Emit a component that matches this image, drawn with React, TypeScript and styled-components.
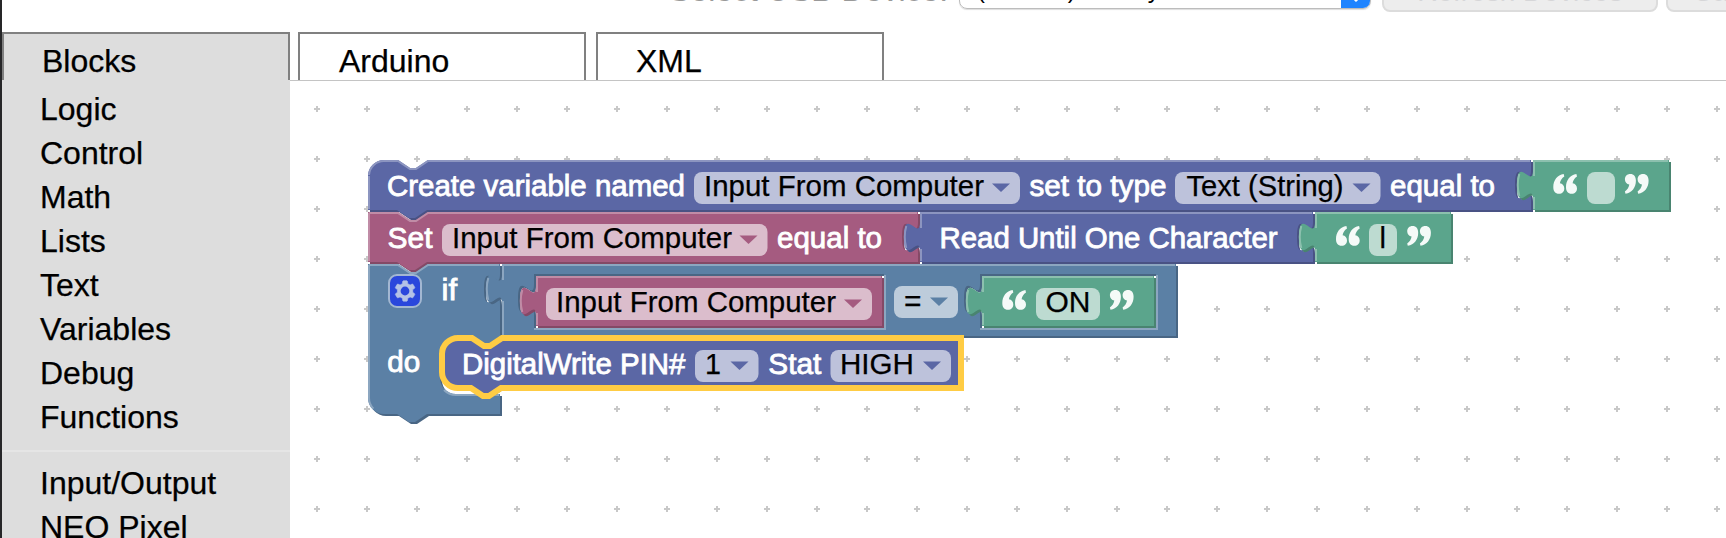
import React from "react";
import styled, { createGlobalStyle } from "styled-components";

const GlobalStyle = createGlobalStyle`
  body {
    margin: 0;
    background: #fff;
    overflow: hidden;
    font-family: "Liberation Sans", Arial, sans-serif;
  }
`;

const Page = styled.div`
  box-sizing: border-box;
  display: flex;
  flex-direction: column;
  width: 1726px;
  height: 538px;
  overflow: hidden;
  border-left: 2px solid #262628;
  background: #fff;
  color: #000;
`;

const Header = styled.header`
  flex: none;
  height: 32px;
  overflow: hidden;
`;

const PortBar = styled.div`
  display: flex;
  align-items: flex-start;
  width: 1800px;
  margin-top: -30px;
  padding-left: 667px;
`;

const PortLabel = styled.div`
  width: 290px;
  height: 40px;
  line-height: 40px;
  font-size: 32px;
  color: #999;
  white-space: nowrap;
`;

const Select = styled.div`
  box-sizing: border-box;
  display: flex;
  width: 412px;
  height: 39px;
  overflow: hidden;
  border: 1px solid #bcbcbc;
  border-radius: 8px;
  box-shadow: 0 1px 1px #ddd;
`;

const SelectText = styled.div`
  flex: 1;
  padding-left: 17px;
  font-size: 24px;
  line-height: 38px;
  white-space: nowrap;
`;

const SelectArrows = styled.div`
  display: flex;
  align-items: flex-end;
  justify-content: center;
  width: 29px;
  background: #1f84ff;
`;

const HeaderButton = styled.div<{ $width: number }>`
  box-sizing: border-box;
  flex: none;
  width: ${(p) => p.$width}px;
  height: 42px;
  margin-left: ${(p) => (p.$width > 200 ? 11 : 8)}px;
  border: 2px solid #dcdcdc;
  border-radius: 8px;
  background: #ededed;
  color: #d6d6d8;
  font-size: 28px;
  line-height: 39px;
  text-align: center;
  white-space: nowrap;
`;

const TabBar = styled.nav`
  flex: none;
  display: flex;
  height: 48px;
`;

const Tab = styled.div<{ $active?: boolean; $gap?: number }>`
  box-sizing: border-box;
  width: 288px;
  height: 48px;
  margin-left: ${(p) => p.$gap ?? 0}px;
  padding-left: ${(p) => (p.$gap === 8 ? 39 : 38)}px;
  border: 2px solid #808080;
  border-bottom: 0;
  background: ${(p) => (p.$active ? "#ddd" : "#fff")};
  font-size: 32px;
  line-height: 54px;
  -webkit-text-stroke: 0.25px #000;
`;

const Main = styled.div`
  display: flex;
  flex: 1;
  min-height: 0;
`;

const Toolbox = styled.aside`
  flex: none;
  box-sizing: border-box;
  width: 288px;
  padding-top: 7px;
  overflow: hidden;
  background: #ddd;
`;

const Category = styled.div`
  height: 44px;
  padding-left: 38px;
  font-size: 32px;
  line-height: 44px;
  white-space: nowrap;
  -webkit-text-stroke: 0.25px #000;
`;

const Separator = styled.div`
  height: 2px;
  margin: 11px 0 9px;
  background: #e5e5e5;
`;

const Workspace = styled.section`
  flex: 1;
  overflow: hidden;
  border-top: 1px solid #c4c4c4;
`;

const Canvas = styled.svg`
  display: block;
`;

const LabelText = styled.text`
  font-family: "Liberation Sans", Arial, sans-serif;
  font-size: 29.8px;
  fill: #fff;
  stroke: #fff;
  stroke-width: 0.85px;
`;

const ValueText = styled.text`
  font-family: "Liberation Sans", Arial, sans-serif;
  font-size: 29.8px;
  fill: #000;
  stroke: #000;
  stroke-width: 0.25px;
`;

const FieldBox = styled.rect`
  fill: #fff;
  fill-opacity: 0.6;
`;

type Hue = { main: string; light: string; dark: string };

const BLUE: Hue = { main: "#5b67a5", light: "#8c95c0", dark: "#495284" };
const PINK: Hue = { main: "#a55b80", light: "#c08ca6", dark: "#844966" };
const STEEL: Hue = { main: "#5b80a5", light: "#8ca6c0", dark: "#496684" };
const GREEN: Hue = { main: "#5ba58c", light: "#8cc0ae", dark: "#498470" };

const NOTCH = "H 15 l 6,4 3,0 6,-4";
const NOTCH_BACK = "H 29.5 l -6,4 -3,0 -6,-4";
const SOCKET = "v 5 c 0,10 -8,-8 -8,7.5 s 8,-2.5 8,7.5";
const PLUG = "V 20 c 0,-10 -8,8 -8,-7.5 s 8,2.5 8,-7.5";
const PLUG_LIGHT = "V 18.5 m -7.36,-0.5 q -1.52,-5.5 0,-11 m 7.36,1 V 0.5 H 1";
const ROUND_TOP = "m 0,8 A 8,8 0 0,1 8,0";
const ROUND_TOP_LIGHT = "m 0.5,7.5 A 7.5,7.5 0 0,1 8,0.5";

const socketLight = (edge: number, y = 0) => `M ${edge - 5},${y + 19.3} l 3.68,-2.1`;

const valuePath = (w: number, socket = false) =>
  `m 0,0 H ${w} ${socket ? SOCKET : ""} V 25 H 0 ${PLUG} z`;
const valueLight = (w: number, socket = false, h = 25) =>
  `m 0.5,0.5 H ${w - 0.5} ${socket ? socketLight(w) : ""} M 0.5,${h - 0.5} ${PLUG_LIGHT}`;

const cutout = (x: number, w: number) => `M ${x + w},5 H ${x} ${SOCKET} V 32 H ${x + w} z`;
const cutoutLight = (x: number, w: number) =>
  `M ${x + w + 0.5},5.5 V 32.5 H ${x} ${socketLight(x + 0.4, 5)}`;

interface BlockProps {
  x: number;
  y: number;
  hue: Hue;
  path: string;
  light?: string;
  selected?: boolean;
}

function Block({ x, y, hue, path, light, selected }: BlockProps) {
  return (
    <g transform={`translate(${x} ${y}) scale(2)`}>
      <path d={path} transform="translate(1 1)" fill={hue.dark} fillRule="evenodd" />
      <path
        d={path}
        fill={hue.main}
        fillRule="evenodd"
        stroke={selected ? "#fc4" : "none"}
        strokeWidth={3}
      />
      {light && <path d={light} fill="none" stroke={hue.light} strokeWidth={1} />}
    </g>
  );
}

interface TextProps {
  x: number;
  y: number;
  w: number;
  children: string;
}

const Label = ({ x, y, w, children }: TextProps) => (
  <LabelText x={x} y={y} textLength={w} lengthAdjust="spacingAndGlyphs">
    {children}
  </LabelText>
);

interface FieldProps {
  x: number;
  y: number;
  w: number;
  textX?: number;
  textW?: number;
  text?: string;
  hue?: Hue;
  baseline?: number;
}

function Field({ x, y, w, textX, textW, text, hue, baseline = 24 }: FieldProps) {
  const right = x + w;
  return (
    <g>
      <FieldBox x={x} y={y} width={w} height={32} rx={8} />
      {text && (
        <ValueText x={textX} y={y + baseline} textLength={textW} lengthAdjust="spacingAndGlyphs">
          {text}
        </ValueText>
      )}
      {hue && (
        <path d={`M ${right - 28},${y + 11.5} h 18 l -9,8.5 z`} fill={hue.main} />
      )}
    </g>
  );
}

const MARK =
  "M10.4 0 C4 1.2 0 6 0 13 C0 17.4 2 19.8 5.6 19.8 C8.9 19.8 11 17.6 11 14.5 C11 11.6 9.2 9.6 6.6 9.3 C7 6.4 8.6 3.9 11 2.4 Z";

function Quote({ x, y, close }: { x: number; y: number; close?: boolean }) {
  return (
    <g
      fill="#fff"
      fillOpacity={0.94}
      transform={`translate(${x} ${y})${close ? " rotate(180 11.8 9.9)" : ""}`}
    >
      <path d={MARK} />
      <path d={MARK} transform="translate(12.7 0)" />
    </g>
  );
}

function Gear({ x, y }: { x: number; y: number }) {
  return (
    <g transform={`translate(${x} ${y}) scale(2)`}>
      <rect width={16} height={16} rx={4} fill="#2a47dc" stroke="#a3b7d2" />
      <path
        fill="#b4c2e6"
        stroke="#b4c2e6"
        strokeWidth={0.3}
        d="m4.203,7.296 0,1.368 -0.92,0.677 -0.11,0.41 0.9,1.559 0.41,0.11 1.043,-0.457 1.187,0.683 0.127,1.134 0.3,0.3 1.8,0 0.3,-0.299 0.127,-1.138 1.185,-0.682 1.046,0.458 0.409,-0.11 0.9,-1.559 -0.11,-0.41 -0.92,-0.677 0,-1.366 0.92,-0.677 0.11,-0.41 -0.9,-1.559 -0.409,-0.109 -1.046,0.458 -1.185,-0.682 -0.127,-1.138 -0.3,-0.299 -1.8,0 -0.3,0.3 -0.126,1.135 -1.187,0.682 -1.043,-0.457 -0.41,0.11 -0.899,1.559 0.108,0.409z"
      />
      <circle cx={8} cy={8} r={2.2} fill="#2a47dc" />
    </g>
  );
}

function Blocks() {
  return (
    <g>
      <Block
        x={368}
        y={160}
        hue={BLUE}
        path={`${ROUND_TOP} ${NOTCH} H 581.5 ${SOCKET} V 25 ${NOTCH_BACK} H 0 z`}
        light={`${ROUND_TOP_LIGHT} ${NOTCH} H 581 ${socketLight(581.5)} M 0.5,24.5 V 8`}
      />
      <Label x={387} y={196} w={298}>Create variable named</Label>
      <Field x={694} y={172} w={326} text="Input From Computer" textX={704} textW={280} hue={BLUE} />
      <Label x={1029.5} y={196} w={137}>set to type</Label>
      <Field x={1175} y={172} w={205.5} text="Text (String)" textX={1186.5} textW={157} hue={BLUE} />
      <Label x={1390} y={196} w={105}>equal to</Label>
      <Block x={1533} y={160} hue={GREEN} path={valuePath(68)} light={valueLight(68)} />
      <Quote x={1553.3} y={174} />
      <Field x={1587} y={172} w={28} />
      <Quote x={1625} y={174} close />

      <Block
        x={368}
        y={212}
        hue={PINK}
        path={`m 0,0 ${NOTCH} H 275 ${SOCKET} V 25 ${NOTCH_BACK} H 0 z`}
        light={`m 0.5,0.5 ${NOTCH} H 274.5 ${socketLight(275)} M 0.5,24.5 V 0.5`}
      />
      <Label x={387.5} y={248} w={45}>Set</Label>
      <Field x={442} y={224} w={325.5} text="Input From Computer" textX={452} textW={280} hue={PINK} />
      <Label x={777} y={248} w={105}>equal to</Label>
      <Block x={920} y={212} hue={BLUE} path={valuePath(196.5, true)} light={valueLight(196.5, true)} />
      <Label x={939.5} y={248} w={338}>Read Until One Character</Label>
      <Block x={1315} y={212} hue={GREEN} path={valuePath(68)} light={valueLight(68)} />
      <Quote x={1336} y={226} />
      <Field x={1369} y={224} w={28} text="l" textX={1379.6} textW={6.5} />
      <Quote x={1407.3} y={226} close />

      <Block
        x={368}
        y={264}
        hue={STEEL}
        path={`m 0,0 ${NOTCH} H 66 ${SOCKET} V 36 l -6,4 -3,0 -6,-4 h -7 a 8,8 0 0,0 -8,8 v 13 a 8,8 0 0,0 8,8 H 66 V 75 ${NOTCH_BACK} H 8 a 8,8 0 0,1 -8,-8 z`}
        light={`m 0.5,0.5 ${NOTCH} H 65.5 ${socketLight(66)} M 38,63 A 8.5,8.5 0 0,0 44,65.5 H 65.5 M 2.7,72.3 A 7.5,7.5 0 0,1 0.5,67 V 0.5`}
      />
      <Gear x={389} y={275} />
      <Label x={441.5} y={300} w={15.5}>if</Label>
      <Label x={387.3} y={372} w={33}>do</Label>
      <Block
        x={502}
        y={264}
        hue={STEEL}
        path={`m 0,0 H 337 V 36 H 0 ${PLUG} z ${cutout(16, 175)} ${cutout(239, 88)}`}
        light={`${valueLight(337, false, 36)} ${cutoutLight(16, 175)} ${cutoutLight(239, 88)}`}
      />
      <Block x={536} y={276} hue={PINK} path={valuePath(173)} light={valueLight(173)} />
      <Field x={546} y={288} w={326} text="Input From Computer" textX={556} textW={280} hue={PINK} />
      <Field x={894} y={286} w={64} text="=" textX={904} textW={17.5} hue={STEEL} baseline={25} />
      <Block x={982} y={276} hue={GREEN} path={valuePath(86)} light={valueLight(86)} />
      <Quote x={1002.3} y={290} />
      <Field x={1036} y={288} w={64} text="ON" textX={1045.5} textW={45} />
      <Quote x={1110} y={290} close />

      <Block
        x={442}
        y={338}
        hue={BLUE}
        selected
        path={`${ROUND_TOP} ${NOTCH} H 259.5 V 25 ${NOTCH_BACK} H 8 a 8,8 0 0,1 -8,-8 z`}
      />
      <Label x={462} y={374} w={223.5}>DigitalWrite PIN#</Label>
      <Field x={695} y={350} w={63.5} text="1" textX={705} textW={16} hue={BLUE} />
      <Label x={768.3} y={374} w={53}>Stat</Label>
      <Field x={830.5} y={350} w={120.5} text="HIGH" textX={840} textW={74} hue={BLUE} />
    </g>
  );
}

const MAIN_CATEGORIES = ["Logic", "Control", "Math", "Lists", "Text", "Variables", "Debug", "Functions"];
const DEVICE_CATEGORIES = ["Input/Output", "NEO Pixel"];

export default function App() {
  return (
    <>
      <GlobalStyle />
      <Page>
        <Header>
          <PortBar>
            <PortLabel>Select USB Device:</PortLabel>
            <Select>
              <SelectText>(Arduino) /dev/tty.usbmodem</SelectText>
              <SelectArrows>
                <svg width="12" height="16" viewBox="0 0 12 16">
                  <path d="M1 3 L6 8 L11 3" fill="none" stroke="#fff" strokeWidth="3" />
                </svg>
              </SelectArrows>
            </Select>
            <HeaderButton $width={276}>Refresh Devices</HeaderButton>
            <HeaderButton $width={120}>Save</HeaderButton>
          </PortBar>
        </Header>
        <TabBar>
          <Tab $active>Blocks</Tab>
          <Tab $gap={8}>Arduino</Tab>
          <Tab $gap={10}>XML</Tab>
        </TabBar>
        <Main>
          <Toolbox>
            {MAIN_CATEGORIES.map((name) => (
              <Category key={name}>{name}</Category>
            ))}
            <Separator />
            {DEVICE_CATEGORIES.map((name) => (
              <Category key={name}>{name}</Category>
            ))}
          </Toolbox>
          <Workspace>
            <Canvas width={1436} height={457} viewBox="290 81 1436 457">
              <defs>
                <pattern id="grid" x={292} y={84} width={50} height={50} patternUnits="userSpaceOnUse">
                  <path d="M22 25 h6 M25 22 v6" stroke="#c8c8c8" strokeWidth={2} />
                </pattern>
              </defs>
              <rect x={290} y={81} width={1436} height={457} fill="url(#grid)" />
              <Blocks />
            </Canvas>
          </Workspace>
        </Main>
      </Page>
    </>
  );
}
